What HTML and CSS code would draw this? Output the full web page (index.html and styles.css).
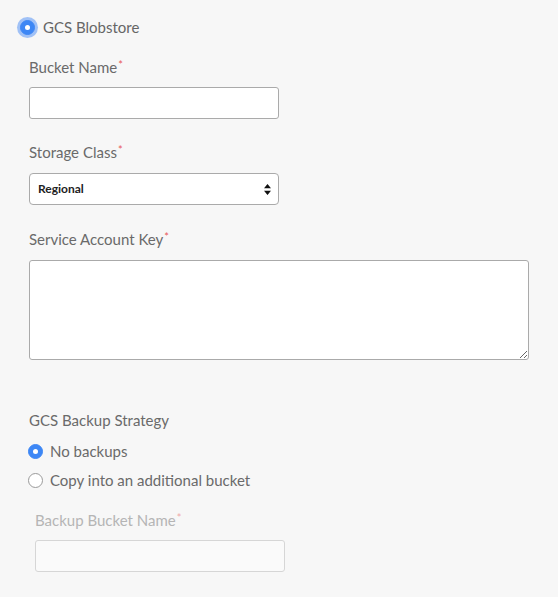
FILE: index.html
```html
<!DOCTYPE html>
<html>
<head>
<meta charset="utf-8">
<link rel="stylesheet" href="styles.css">
</head>
<body>
<div class="page">
  <label class="top-option">
    <span class="radio radio-checked radio-focus"></span>
    <span class="top-text">GCS Blobstore</span>
  </label>

  <div class="form">
    <div class="field">
      <div class="label">Bucket Name<span class="req">*</span></div>
      <input class="input" type="text">
    </div>

    <div class="field field-gap">
      <div class="label">Storage Class<span class="req">*</span></div>
      <div class="select">
        <span class="select-text">Regional</span>
        <svg class="select-arrows" width="7" height="11" viewBox="0 0 7 11"><path d="M3.5 0 L7 4.2 L0 4.2 Z M3.5 11 L7 6.8 L0 6.8 Z" fill="#111"/></svg>
      </div>
    </div>

    <div class="field field-gap field-wide">
      <div class="label">Service Account Key<span class="req">*</span></div>
      <textarea class="textarea"></textarea>
    </div>

    <div class="section">
      <div class="label label-plain">GCS Backup Strategy</div>
      <div class="options">
        <label class="option"><span class="radio radio-checked"></span><span>No backups</span></label>
        <label class="option"><span class="radio"></span><span>Copy into an additional bucket</span></label>
      </div>
    </div>

    <div class="field disabled">
      <div class="label">Backup Bucket Name<span class="req">*</span></div>
      <input class="input input-disabled" type="text" disabled>
    </div>
  </div>
</div>
</body>
</html>
```

FILE: styles.css
```css
html, body {
  margin: 0;
  padding: 0;
  background: #f7f7f7;
}
body {
  font-family: Lato, "Noto Sans", sans-serif;
  font-size: 15px;
  line-height: 20px;
  color: #6a6a6a;
}
.page {
  padding: 17px 0 0 0;
}
.top-option {
  display: flex;
  align-items: center;
  padding-left: 20px;
  gap: 8px;
  height: 20px;
}
.top-text {
  color: #666;
}
.radio {
  box-sizing: border-box;
  width: 15px;
  height: 15px;
  border-radius: 50%;
  border: 1px solid #9a9a9a;
  background: #fff;
  flex: none;
  position: relative;
}
.radio-checked {
  background: #3d87f5;
  border-color: #3d87f5;
}
.radio-checked::after {
  content: "";
  position: absolute;
  left: 50%;
  top: 50%;
  width: 5px;
  height: 5px;
  margin: -2.5px 0 0 -2.5px;
  border-radius: 50%;
  background: #fff;
}
.radio-focus {
  box-shadow: 0 0 0 3px rgba(90, 150, 245, 0.55);
}
.form {
  padding-left: 29px;
  padding-top: 20px;
}
.field-gap {
  margin-top: 23px;
}
.field-wide {
  margin-top: 24px;
}
.label {
  margin-bottom: 10px;
}
.field-gap .label {
  margin-bottom: 11px;
}
.req {
  color: #e8595a;
  font-size: 11px;
  vertical-align: top;
  position: relative;
  top: -2px;
  margin-left: 1px;
}
.input {
  display: block;
  box-sizing: border-box;
  width: 250px;
  height: 32px;
  border: 1px solid #aaa;
  border-radius: 3px;
  background: #fff;
  margin: 0;
  padding: 0 8px;
  font: inherit;
}
.select {
  box-sizing: border-box;
  width: 250px;
  height: 32px;
  border: 1px solid #aaa;
  border-radius: 4px;
  background: #fff;
  display: flex;
  align-items: center;
  justify-content: space-between;
  padding: 0 7px 0 8px;
}
.select-text {
  font-size: 12px;
  font-weight: 700;
  color: #222;
}
.textarea {
  display: block;
  box-sizing: border-box;
  width: 500px;
  height: 100px;
  border: 1px solid #aaa;
  border-radius: 3px;
  background: #fff;
  margin: 0;
  padding: 4px 8px;
  font: inherit;
  resize: vertical;
}
.section {
  margin-top: 50px;
}
.label-plain {
  margin-bottom: 9px;
}
.options {
  display: flex;
  flex-direction: column;
  gap: 5px;
}
.option {
  display: flex;
  align-items: center;
  gap: 7px;
  height: 24px;
  margin-left: -1px;
}
.disabled {
  margin-top: 18px;
  padding-left: 6px;
}
.disabled .label {
  color: #b5b5b5;
}
.disabled .req {
  color: #f0a8a8;
}
.input-disabled {
  background: #fafafa;
  border-color: #d6d6d6;
}
```
